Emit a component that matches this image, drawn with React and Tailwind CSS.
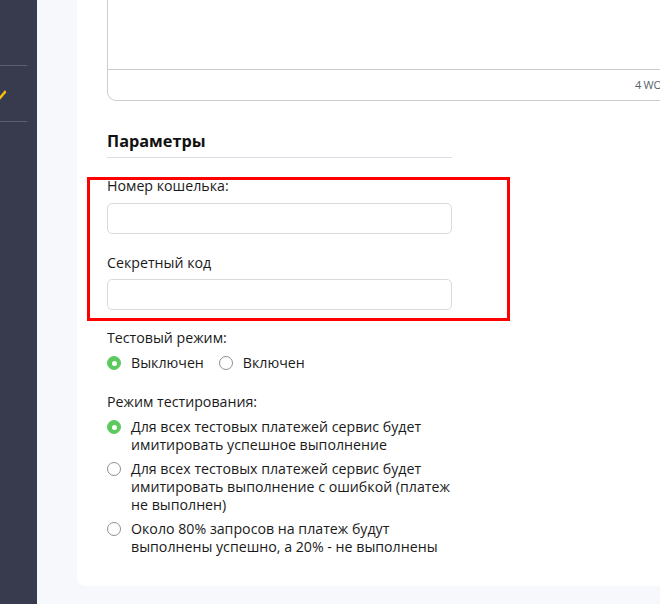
import React from 'react';

const Radio = ({ checked }) => (
  <span
    className={`mt-[2px] flex h-[14px] w-[14px] shrink-0 items-center justify-center rounded-full border ${
      checked ? 'border-[#5cc95f] bg-[#5cc95f]' : 'border-[#8f8f8f] bg-white'
    }`}
  >
    {checked && <span className="h-[5px] w-[5px] rounded-full bg-white" />}
  </span>
);

const Option = ({ checked, children }) => (
  <label className="flex items-start gap-[10px]">
    <Radio checked={checked} />
    <span className="w-[321px]">{children}</span>
  </label>
);

const App = () => {
  return (
    <div
      className="relative flex h-[604px] w-[660px] overflow-hidden bg-[#f7f8fc] text-[14.2px] leading-[18px] text-[#1a1a1a]"
      style={{ fontFamily: '"Open Sans", "Noto Sans", sans-serif' }}
    >
      {/* Sidebar */}
      <aside className="flex w-[37px] shrink-0 flex-col bg-[#383a4d] pt-[65px]">
        <div className="h-px w-[27px] bg-[#5d5f71]" />
        <div className="flex h-[55px] items-center">
          <svg width="8" height="10" viewBox="0 0 8 10" className="-ml-[2px] mt-[2px]">
            <path d="M1 9 L7 2" stroke="#f4c20d" strokeWidth="2.4" fill="none" strokeLinecap="square" />
          </svg>
        </div>
        <div className="h-px w-[27px] bg-[#5d5f71]" />
      </aside>

      {/* Main */}
      <main className="flex-1 pl-[40px]">
        <div className="w-[660px] rounded-b-lg bg-white pl-[30px] pb-[30px]">
          {/* Editor */}
          <div className="w-[585px] rounded-b-[9px] border-x border-b border-[#cccccc]">
            <div className="h-[69px]" />
            <div className="flex h-[31px] items-center border-t border-[#cccccc] pl-[527px] text-[11px] tracking-tight text-[#55606b]">
              4 WORDS
            </div>
          </div>

          {/* Parameters */}
          <div className="mt-[28px] w-[345px]">
            <h3 className="border-b border-[#dcdde6] pb-[4px] text-[16.3px] font-bold leading-[24px] text-[#111]">
              Параметры
            </h3>

            <div className="mt-[19px]">Номер кошелька:</div>
            <input className="mt-[8px] block h-[31px] w-full rounded-[5px] border border-[#dadada] bg-white outline-none" />

            <div className="mt-[20px]">Секретный код</div>
            <input className="mt-[7px] block h-[31px] w-full rounded-[5px] border border-[#dadada] bg-white outline-none" />

            <div className="mt-[19px]">Тестовый режим:</div>
            <div className="mt-[7px] flex items-start gap-[15px]">
              <label className="flex items-start gap-[10px]">
                <Radio checked />
                <span>Выключен</span>
              </label>
              <label className="flex items-start gap-[10px]">
                <Radio />
                <span>Включен</span>
              </label>
            </div>

            <div className="mt-[21px]">Режим тестирования:</div>
            <div className="mt-[7px] flex flex-col gap-[6px]">
              <Option checked>
                Для всех тестовых платежей сервис будет имитировать успешное выполнение
              </Option>
              <Option>
                Для всех тестовых платежей сервис будет имитировать выполнение с ошибкой (платеж не выполнен)
              </Option>
              <Option>
                Около 80% запросов на платеж будут выполнены успешно, а 20% - не выполнены
              </Option>
            </div>
          </div>
        </div>
      </main>

      {/* Annotation highlight */}
      <div className="pointer-events-none absolute left-[87px] top-[177px] h-[144px] w-[423px] border-[3px] border-[#ff0000]" />
    </div>
  );
};

export default App;
